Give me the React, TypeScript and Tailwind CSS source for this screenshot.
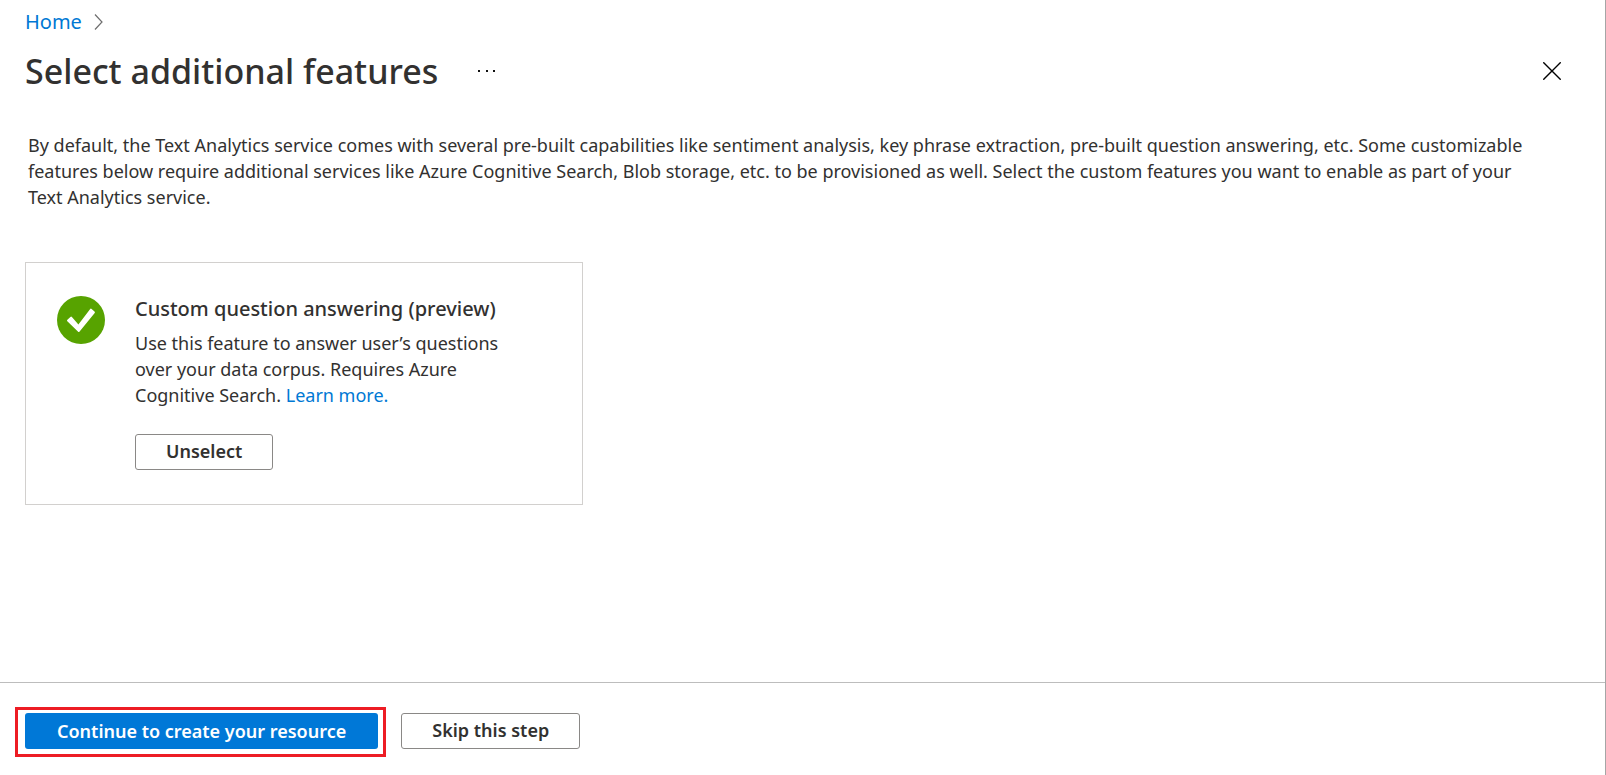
import React, { useState } from "react";

function ChevronIcon() {
  return (
    <svg width="9" height="17" viewBox="0 0 9 17" fill="none" stroke="#6e6e6e" strokeWidth="1.2" aria-hidden="true">
      <path d="M1 0.500l7 7.500-7 7.500" />
    </svg>
  );
}

function MoreIcon() {
  return (
    <svg width="18" height="4" viewBox="0 0 18 4" fill="#111111" aria-hidden="true">
      <rect x="0" y="1" width="2" height="2" />
      <rect x="8" y="1" width="2" height="2" />
      <rect x="15" y="1" width="2" height="2" />
    </svg>
  );
}

function CloseIcon() {
  return (
    <svg width="18" height="18" viewBox="0 0 18 18" fill="none" stroke="#000000" strokeWidth="1.4" aria-hidden="true">
      <path d="M0.3 0.3l17.4 17.4M17.7 0.3L0.3 17.7" />
    </svg>
  );
}

function SelectedIcon() {
  return (
    <svg className="shrink-0" width="48" height="48" viewBox="0 0 48 48" aria-hidden="true">
      <circle cx="24" cy="24" r="24" fill="#57a300" />
      <path
        d="M10.4 23.8l3-2.9q.8-.7 1.5.1l6.5 7.5L33.2 13q.6-.8 1.4-.1l2.9 2.6q.8.6.2 1.4L22.6 35.5q-.8 1-1.7 0L10.3 25.2q-.7-.7.1-1.400z"
        fill="#ffffff"
      />
    </svg>
  );
}

const outlineButton =
  "h-9 cursor-pointer rounded-[3px] border border-[#8a8886] bg-white px-[30px] pb-0.5 text-lg leading-6 font-semibold whitespace-nowrap";

export default function App() {
  const [selected, setSelected] = useState(true);

  return (
    <div className="flex min-h-screen flex-col border-r border-[#a6a6a6] bg-white font-['Noto_Sans','Open_Sans',sans-serif] text-lg text-[#323130]">
      <header className="pt-2 pr-11 pl-[25px]">
        <nav aria-label="Breadcrumb" className="flex items-center gap-3 text-xl leading-7">
          <a href="#home" className="text-[#0078d4]">Home</a>
          <ChevronIcon />
        </nav>
        <div className="mt-[11px] flex items-center">
          <h1 className="text-[34px] leading-12 font-medium">Select additional features</h1>
          <button type="button" aria-label="More options" className="ml-10 cursor-pointer">
            <MoreIcon />
          </button>
          <button type="button" aria-label="Close" className="ml-auto cursor-pointer">
            <CloseIcon />
          </button>
        </div>
      </header>

      <main className="flex-1 pr-14 pb-8 pl-[25px]">
        <p className="mt-[37px] pl-[3px] leading-[26px]">
          By default, the Text Analytics service comes with several pre-built capabilities like sentiment analysis, key
          phrase extraction, pre-built question answering, etc. Some customizable features below require additional
          services like Azure Cognitive Search, Blob storage, etc. to be provisioned as well. Select the custom features
          you want to enable as part of your Text Analytics service.
        </p>

        <section className="mt-[52px] flex max-w-[558px] gap-[30px] border border-[#d2d0ce] px-[31px] pt-[33px] pb-[34px]">
          <SelectedIcon />
          <div>
            <h2 className="text-xl leading-[26px] font-medium">Custom question answering (preview)</h2>
            <p className="mt-2 max-w-[380px] leading-[26px]">
              Use this feature to answer user’s questions over your data corpus. Requires Azure Cognitive Search.{" "}
              <a href="#learn-more" className="text-[#0078d4]">Learn more.</a>
            </p>
            <button type="button" onClick={() => setSelected(!selected)} className={`mt-[26px] ${outlineButton}`}>
              {selected ? "Unselect" : "Select"}
            </button>
          </div>
        </section>
      </main>

      <footer className="flex items-start gap-[15px] border-t border-[#bdbdbd] pt-6 pb-[18px] pl-[15px]">
        <div className="border-3 border-[#ed1c24] pt-[3px] pr-[5px] pb-[5px] pl-[7px]">
          <button
            type="button"
            className="block h-9 cursor-pointer rounded-[3px] bg-[#0078d7] px-8 text-lg leading-6 font-semibold whitespace-nowrap text-white"
          >
            Continue to create your resource
          </button>
        </div>
        <button type="button" className={`mt-1.5 ${outlineButton}`}>Skip this step</button>
      </footer>
    </div>
  );
}
